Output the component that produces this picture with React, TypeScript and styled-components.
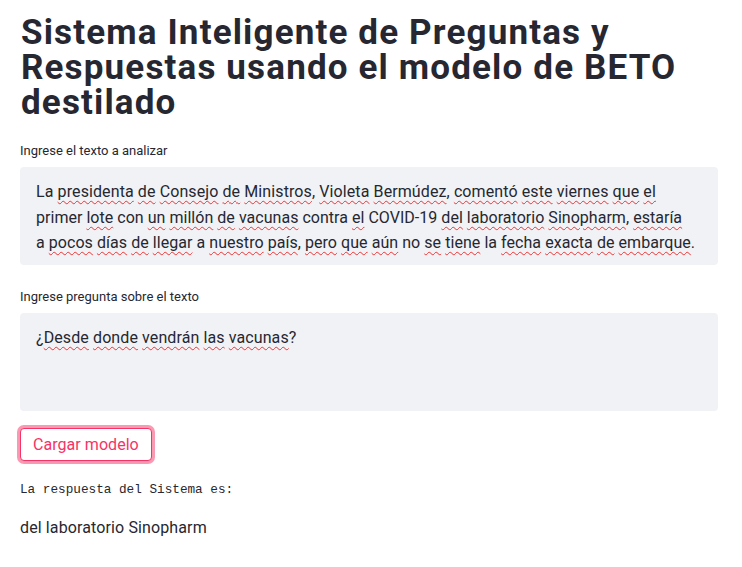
import React from "react";
import styled, { createGlobalStyle } from "styled-components";

const Global = createGlobalStyle`
  html, body { margin: 0; padding: 0; background: #ffffff; }
  body { font-family: Roboto, "Noto Sans", sans-serif; color: #262730; }
`;

const Page = styled.main`
  display: flex;
  flex-direction: column;
  padding: 15px 24px 0 20px;
`;

const Title = styled.h1`
  margin: 0 0 23px 1px;
  font-family: Roboto, "Noto Sans", sans-serif;
  font-weight: 700;
  font-size: 35px;
  line-height: 35px;
  letter-spacing: 1.15px;
  color: #262730;
`;

const Field = styled.div<{ $gap?: number }>`
  display: flex;
  flex-direction: column;
  margin-bottom: ${(p) => p.$gap ?? 0}px;
`;

const Label = styled.label`
  font-size: 13px;
  line-height: 16px;
  color: #262730;
  margin-bottom: 8px;
`;

const Area = styled.div<{ $h: number }>`
  box-sizing: border-box;
  height: ${(p) => p.$h}px;
  background: #f0f2f6;
  border-radius: 4px;
  padding: 12px 16px;
  font-size: 16px;
  line-height: 25.6px;
  color: #262730;
`;

const Line = styled.span<{ $ls: number }>`
  display: block;
  white-space: nowrap;
  letter-spacing: ${(p) => p.$ls}px;
`;

const Bad = styled.span`
  text-decoration: underline wavy #e33;
  text-decoration-thickness: 1px;
  text-underline-offset: 3px;
`;

const Button = styled.button`
  align-self: flex-start;
  margin-top: 17px;
  box-sizing: border-box;
  height: 33px;
  padding: 0 12px;
  background: #fff;
  border: 1px solid #f63366;
  border-radius: 4px;
  box-shadow: 0 0 0 3px rgba(246, 51, 102, 0.5);
  color: #f63366;
  font-family: Roboto, "Noto Sans", sans-serif;
  font-size: 16px;
  letter-spacing: 0.05px;
  cursor: pointer;
`;

const Mono = styled.pre`
  margin: 21px 0 0 0;
  font-family: "Liberation Mono", "DejaVu Sans Mono", monospace;
  font-size: 12.7px;
  line-height: 16px;
  color: #262730;
`;

const Answer = styled.p`
  margin: 19px 0 0 0;
  font-size: 16px;
  line-height: 22px;
  letter-spacing: 0.12px;
  color: #262730;
`;

const W = (s: string) => <Bad>{s}</Bad>;

export default function App() {
  return (
    <>
      <Global />
      <Page>
        <Title>
          Sistema Inteligente de Preguntas y
          <br />
          Respuestas usando el modelo de BETO
          <br />
          destilado
        </Title>
        <Field $gap={24}>
          <Label>Ingrese el texto a analizar</Label>
          <Area $h={98}>
            <Line $ls={0.1}>
              La {W("presidenta")} {W("de")} {W("Consejo")} {W("de")} {W("Ministros")}, {W("Violeta")}{" "}
              {W("Bermúdez")}, {W("comentó")} {W("este")} {W("viernes")} {W("que")} {W("el")}
            </Line>
            <Line $ls={0.03}>
              primer {W("lote")} con {W("un")} {W("millón")} {W("de")} {W("vacunas")} contra {W("el")} COVID-19{" "}
              {W("del")} {W("laboratorio")} {W("Sinopharm")}, {W("estaría")}
            </Line>
            <Line $ls={0.05}>
              a {W("pocos")} {W("días")} {W("de")} {W("llegar")} a {W("nuestro")} {W("país")}, {W("pero")}{" "}
              {W("que")} {W("aún")} no {W("se")} {W("tiene")} la {W("fecha")} {W("exacta")} {W("de")}{" "}
              {W("embarque")}.
            </Line>
          </Area>
        </Field>
        <Field>
          <Label>Ingrese pregunta sobre el texto</Label>
          <Area $h={98}>
            <Line $ls={0.1}>
              ¿{W("Desde")} {W("donde")} {W("vendrán")} {W("las")} {W("vacunas")}?
            </Line>
          </Area>
        </Field>
        <Button>Cargar modelo</Button>
        <Mono>La respuesta del Sistema es:</Mono>
        <Answer>del laboratorio Sinopharm</Answer>
      </Page>
    </>
  );
}
